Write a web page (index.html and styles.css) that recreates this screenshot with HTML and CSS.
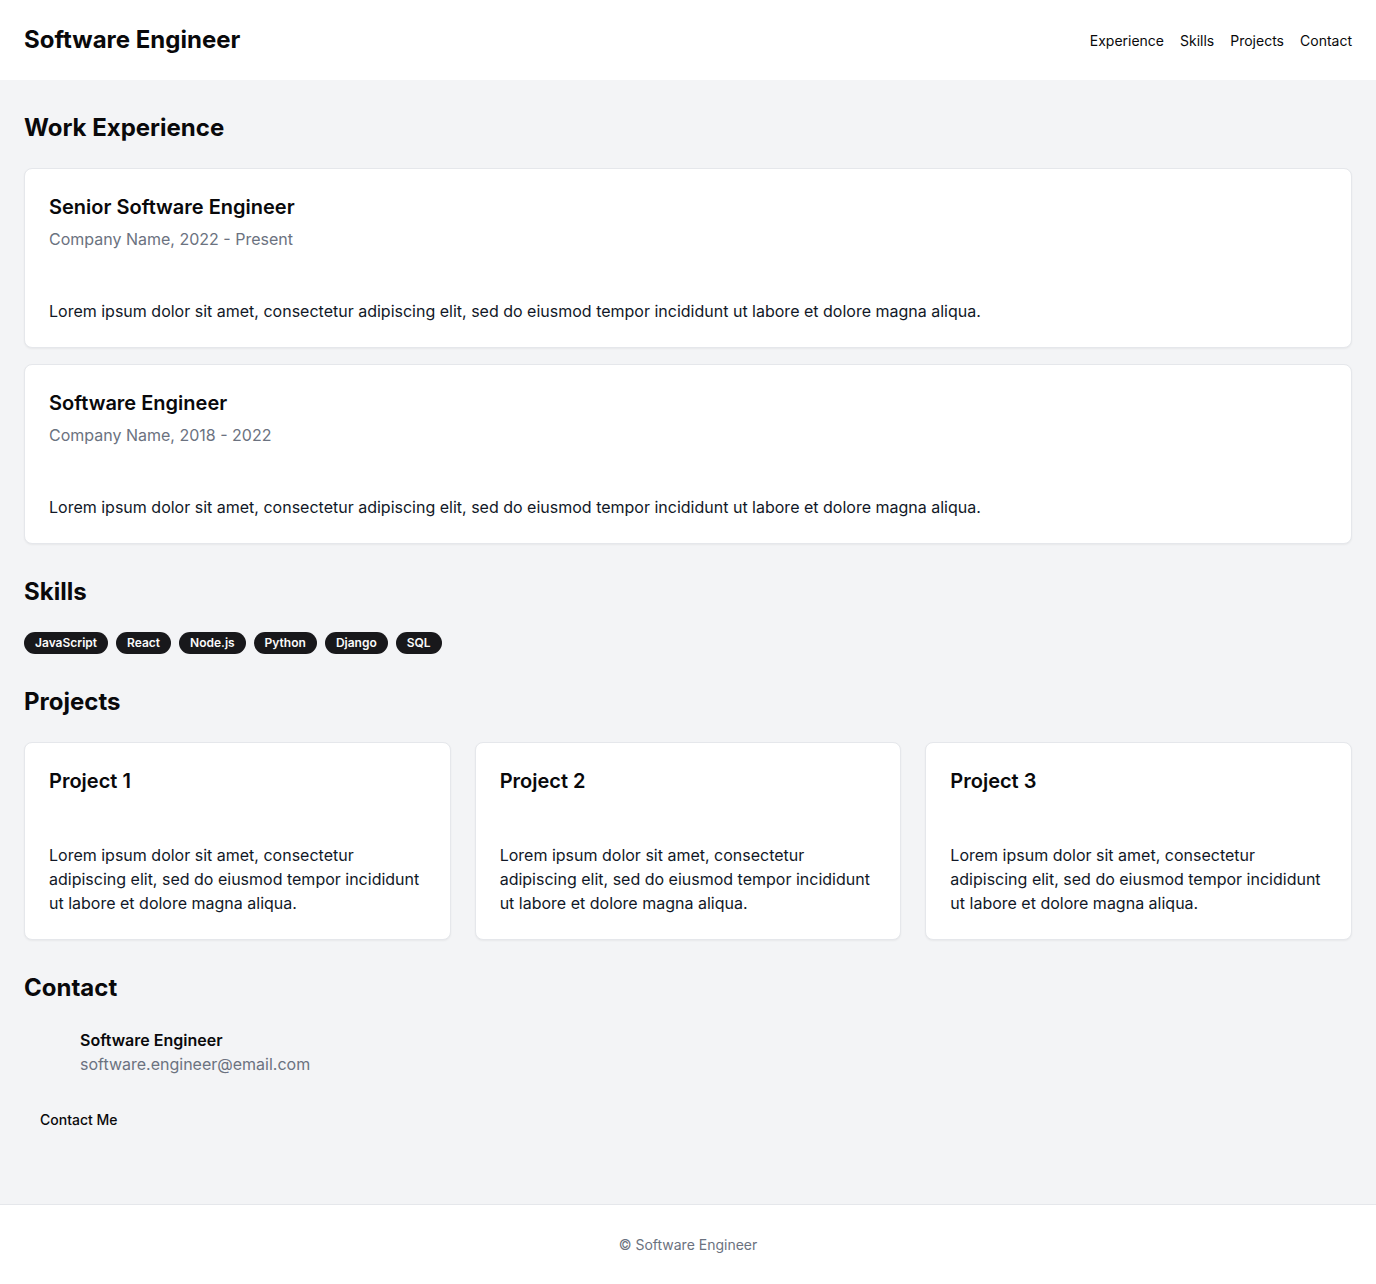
FILE: index.html
```html
<!DOCTYPE html>
<html lang="en">
<head>
<meta charset="utf-8">
<title>Software Engineer</title>
<link rel="stylesheet" href="styles.css">
</head>
<body>
<div class="page">
  <header class="site-header">
    <h1 class="brand">Software Engineer</h1>
    <nav class="nav">
      <a href="#experience">Experience</a>
      <a href="#skills">Skills</a>
      <a href="#projects">Projects</a>
      <a href="#contact">Contact</a>
    </nav>
  </header>

  <main class="main">
    <section class="section" id="experience">
      <h2 class="section-title">Work Experience</h2>
      <div class="stack">
        <div class="card">
          <div class="card-header">
            <h3 class="card-title">Senior Software Engineer</h3>
            <p class="card-desc">Company Name, 2022 - Present</p>
          </div>
          <div class="card-content">
            <p>Lorem ipsum dolor sit amet, consectetur adipiscing elit, sed do eiusmod tempor incididunt ut labore et dolore magna aliqua.</p>
          </div>
        </div>
        <div class="card">
          <div class="card-header">
            <h3 class="card-title">Software Engineer</h3>
            <p class="card-desc">Company Name, 2018 - 2022</p>
          </div>
          <div class="card-content">
            <p>Lorem ipsum dolor sit amet, consectetur adipiscing elit, sed do eiusmod tempor incididunt ut labore et dolore magna aliqua.</p>
          </div>
        </div>
      </div>
    </section>

    <section class="section" id="skills">
      <h2 class="section-title">Skills</h2>
      <div class="badges">
        <span class="badge">JavaScript</span>
        <span class="badge">React</span>
        <span class="badge">Node.js</span>
        <span class="badge">Python</span>
        <span class="badge">Django</span>
        <span class="badge">SQL</span>
      </div>
    </section>

    <section class="section" id="projects">
      <h2 class="section-title">Projects</h2>
      <div class="grid">
        <div class="card">
          <div class="card-header">
            <h3 class="card-title">Project 1</h3>
          </div>
          <div class="card-content">
            <p>Lorem ipsum dolor sit amet, consectetur adipiscing elit, sed do eiusmod tempor incididunt ut labore et dolore magna aliqua.</p>
          </div>
        </div>
        <div class="card">
          <div class="card-header">
            <h3 class="card-title">Project 2</h3>
          </div>
          <div class="card-content">
            <p>Lorem ipsum dolor sit amet, consectetur adipiscing elit, sed do eiusmod tempor incididunt ut labore et dolore magna aliqua.</p>
          </div>
        </div>
        <div class="card">
          <div class="card-header">
            <h3 class="card-title">Project 3</h3>
          </div>
          <div class="card-content">
            <p>Lorem ipsum dolor sit amet, consectetur adipiscing elit, sed do eiusmod tempor incididunt ut labore et dolore magna aliqua.</p>
          </div>
        </div>
      </div>
    </section>

    <section class="section" id="contact">
      <h2 class="section-title">Contact</h2>
      <div class="contact-row">
        <span class="avatar"></span>
        <div class="contact-info">
          <p class="contact-name">Software Engineer</p>
          <p class="contact-email">software.engineer@email.com</p>
        </div>
      </div>
      <button class="btn-ghost" type="button">Contact Me</button>
    </section>
  </main>

  <footer class="site-footer">
    <p>© Software Engineer</p>
  </footer>
</div>
</body>
</html>
```

FILE: styles.css
```css
* {
  box-sizing: border-box;
}

html, body {
  margin: 0;
  padding: 0;
}

body {
  font-family: Inter, "Noto Sans", "Liberation Sans", sans-serif;
  color: #09090b;
  background: #ffffff;
  -webkit-font-smoothing: antialiased;
}

p, h1, h2, h3 {
  margin: 0;
}

.page {
  min-height: 100vh;
  display: flex;
  flex-direction: column;
}

.site-header {
  display: flex;
  align-items: center;
  justify-content: space-between;
  padding: 24px;
  background: #ffffff;
}

.brand {
  font-size: 24px;
  line-height: 32px;
  font-weight: 700;
}

.nav {
  display: flex;
  gap: 16px;
  padding-top: 2px;
}

.nav a {
  font-size: 14px;
  line-height: 20px;
  font-weight: 400;
  color: #09090b;
  text-decoration: none;
}

.main {
  flex: 1;
  background: #f3f4f6;
  padding: 32px 24px 64px;
  display: flex;
  flex-direction: column;
  gap: 32px;
}

.section-title {
  font-size: 24px;
  line-height: 32px;
  font-weight: 700;
  margin-bottom: 24px;
}

.stack {
  display: flex;
  flex-direction: column;
  gap: 16px;
}

.card {
  background: #ffffff;
  border: 1px solid #e5e7eb;
  border-radius: 8px;
  box-shadow: 0 1px 2px rgba(0, 0, 0, 0.05);
}

.card-header {
  padding: 24px;
  display: flex;
  flex-direction: column;
  gap: 6px;
}

.card-title {
  font-size: 20px;
  line-height: 28px;
  font-weight: 600;
}

.card-desc {
  font-size: 16px;
  line-height: 24px;
  color: #6b7280;
}

.card-content {
  padding: 24px;
  font-size: 16px;
  line-height: 24px;
  color: #111827;
}

.badges {
  display: flex;
  flex-wrap: wrap;
  gap: 8px;
}

.badge {
  display: inline-flex;
  align-items: center;
  border: 1px solid transparent;
  border-radius: 9999px;
  padding: 2px 10px;
  font-size: 12px;
  line-height: 16px;
  font-weight: 600;
  background: #18181b;
  color: #fafafa;
}

.grid {
  display: grid;
  grid-template-columns: repeat(3, 1fr);
  gap: 24px;
}

.contact-row {
  display: flex;
  align-items: center;
  gap: 16px;
}

.avatar {
  width: 40px;
  height: 40px;
  flex-shrink: 0;
}

.contact-name {
  font-size: 16px;
  line-height: 24px;
  font-weight: 600;
}

.contact-email {
  font-size: 16px;
  line-height: 24px;
  color: #6b7280;
}

.btn-ghost {
  margin-top: 23px;
  height: 40px;
  padding: 0 16px;
  border: none;
  background: transparent;
  font-family: inherit;
  font-size: 14px;
  font-weight: 500;
  color: #09090b;
  border-radius: 6px;
  cursor: pointer;
}

.site-footer {
  background: #ffffff;
  border-top: 1px solid #e5e7eb;
  padding: 30px 24px 29px;
  text-align: center;
}

.site-footer p {
  font-size: 14px;
  line-height: 20px;
  color: #6b7280;
}
```
